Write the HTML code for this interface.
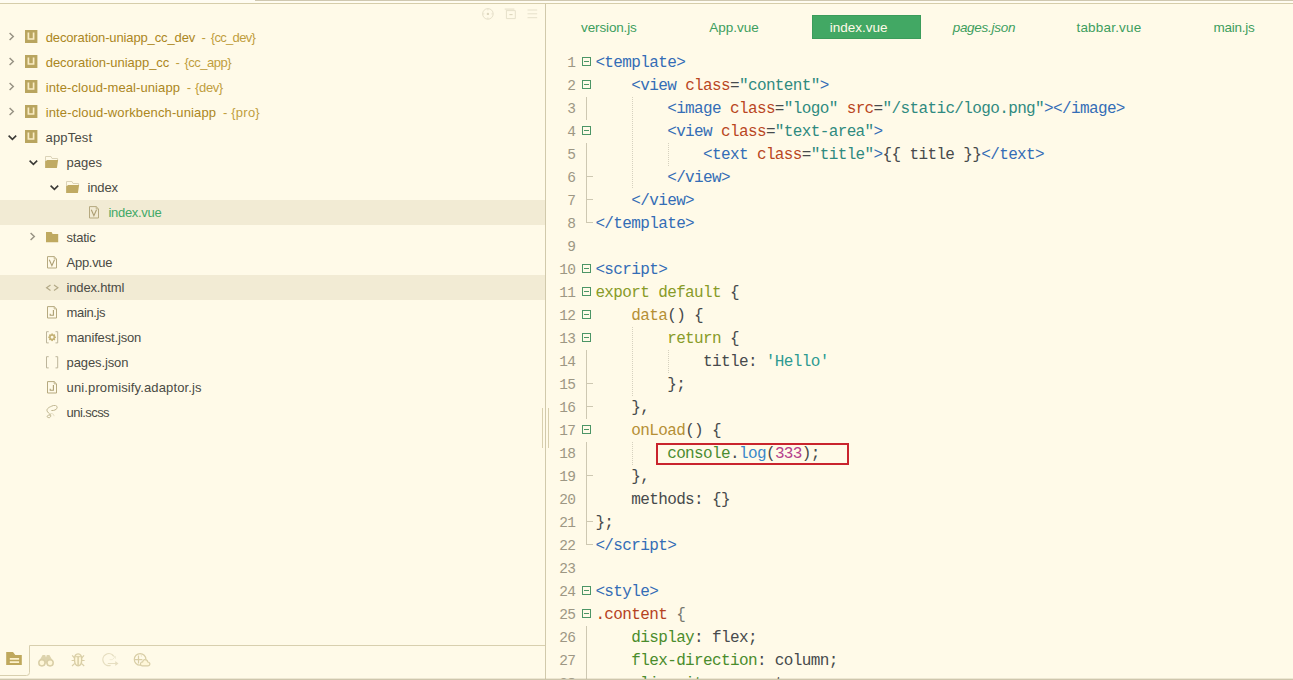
<!DOCTYPE html>
<html>
<head>
<meta charset="utf-8">
<title>HBuilderX</title>
<style>
html,body{margin:0;padding:0;}
body{width:1293px;height:680px;overflow:hidden;background:#fffae8;position:relative;font-family:"Liberation Sans",sans-serif;}
.abs{position:absolute;}
#top0a{left:0;top:0;width:255px;height:1px;background:#fffcf3;}
#top0b{left:255px;top:0;width:1038px;height:1px;background:#d0c8b0;}
#top12{left:0;top:1px;width:1293px;height:2px;background:#fffcf1;}
#top3{left:0;top:3px;width:1293px;height:1px;background:#d6cdaa;}
#bot{left:0;top:678px;width:1293px;height:1px;background:rgba(190,180,150,0.28);}
#bot2{left:0;top:679px;width:1293px;height:1px;background:#cec6ac;}
#vsplit{left:545px;top:4px;width:1px;height:675px;background:#d1c9ab;}
#grip1{left:542px;top:408px;width:1px;height:40px;background:#d8cfae;}
#grip2{left:548px;top:408px;width:1px;height:40px;background:#d8cfae;}
.row{position:absolute;left:0;width:545px;height:25px;}
.row.hl{background:#f2ebd4;}
.t{position:absolute;top:0;line-height:25px;font-size:13px;color:#4a4a44;white-space:nowrap;}
.t.g{color:#ab8622;}
.t.g2{color:#bf9e3e;}
.t.sel{color:#43a967;}
.row svg{position:absolute;}
.tab{position:absolute;top:15.5px;height:24px;line-height:24px;font-size:13.5px;color:#3d9e5e;white-space:nowrap;}
#tabsel{left:812px;top:15px;width:107px;height:22px;background:#42a864;border:1px solid #3b9c5b;}
.ln{position:absolute;left:546px;width:29.3px;text-align:right;height:23px;line-height:23px;font-family:"Liberation Mono",monospace;font-size:14.5px;letter-spacing:-0.7px;color:#9d9784;}
.cl{position:absolute;left:595.4px;height:23px;line-height:23px;font-family:"Liberation Mono",monospace;font-size:16px;letter-spacing:-0.63px;color:#474a4c;white-space:pre;}
.tg{color:#346db6;}
.at{color:#b9471f;}
.vl{color:#2f8a80;}
.kw{color:#889b28;}
.fn{color:#b58f35;}
.st{color:#2e9a92;}
.ob{color:#4a8c30;}
.mt{color:#3a88c9;}
.nm{color:#b5408c;}
.se{color:#b5421f;}
.lb{color:#77776e;}
.pr{color:#4a8c2c;}
.fold{position:absolute;left:582px;width:7px;height:7px;border:1px solid #4c9566;}
.fold:after{content:"";position:absolute;left:1px;top:3px;width:5px;height:1px;background:#4c9566;}
.fl{position:absolute;left:586px;width:1px;background:#cec8b2;}
.ft{position:absolute;left:587px;width:6px;height:1px;background:#cec8b2;}
.ig{position:absolute;width:1px;background-image:linear-gradient(to bottom,#d6d1bf 50%,transparent 50%);background-size:1px 2px;}
#redbox{left:655.5px;top:442.5px;width:189px;height:18px;border:2px solid #c9242d;}
</style>
</head>
<body>
<div id="tree">
<div class="row" style="top:25px">
<svg style="left:8px;top:6.4px" width="8" height="11" viewBox="0 0 8 11"><path d="M1.6 1.9 L5.3 5.5 L1.6 9.1" fill="none" stroke="#979283" stroke-width="1.45"/></svg>
<svg style="left:25px;top:5px" width="13" height="13" viewBox="0 0 13 13"><rect width="12.4" height="13" fill="#b9a55f"/><path d="M3.4 2.6 V9 H8.6 V2.6" fill="none" stroke="#f9ecc3" stroke-width="1.7"/></svg>
<span class="t g" style="left:45.7px;letter-spacing:-0.126px">decoration-uniapp_cc_dev</span>
<span class="t g2" style="left:201.6px;letter-spacing:0px">-</span>
<span class="t g2" style="left:210.8px;letter-spacing:-0.693px">{cc_dev}</span>
</div>
<div class="row" style="top:50px">
<svg style="left:8px;top:6.4px" width="8" height="11" viewBox="0 0 8 11"><path d="M1.6 1.9 L5.3 5.5 L1.6 9.1" fill="none" stroke="#979283" stroke-width="1.45"/></svg>
<svg style="left:25px;top:5px" width="13" height="13" viewBox="0 0 13 13"><rect width="12.4" height="13" fill="#b9a55f"/><path d="M3.4 2.6 V9 H8.6 V2.6" fill="none" stroke="#f9ecc3" stroke-width="1.7"/></svg>
<span class="t g" style="left:45.7px;letter-spacing:-0.037px">decoration-uniapp_cc</span>
<span class="t g2" style="left:175.6px;letter-spacing:0px">-</span>
<span class="t g2" style="left:184.4px;letter-spacing:-0.471px">{cc_app}</span>
</div>
<div class="row" style="top:75px">
<svg style="left:8px;top:6.4px" width="8" height="11" viewBox="0 0 8 11"><path d="M1.6 1.9 L5.3 5.5 L1.6 9.1" fill="none" stroke="#979283" stroke-width="1.45"/></svg>
<svg style="left:25px;top:5px" width="13" height="13" viewBox="0 0 13 13"><rect width="12.4" height="13" fill="#b9a55f"/><path d="M3.4 2.6 V9 H8.6 V2.6" fill="none" stroke="#f9ecc3" stroke-width="1.7"/></svg>
<span class="t g" style="left:45.7px;letter-spacing:0.098px">inte-cloud-meal-uniapp</span>
<span class="t g2" style="left:186.8px;letter-spacing:0px">-</span>
<span class="t g2" style="left:195.1px;letter-spacing:-0.388px">{dev}</span>
</div>
<div class="row" style="top:100px">
<svg style="left:8px;top:6.4px" width="8" height="11" viewBox="0 0 8 11"><path d="M1.6 1.9 L5.3 5.5 L1.6 9.1" fill="none" stroke="#979283" stroke-width="1.45"/></svg>
<svg style="left:25px;top:5px" width="13" height="13" viewBox="0 0 13 13"><rect width="12.4" height="13" fill="#b9a55f"/><path d="M3.4 2.6 V9 H8.6 V2.6" fill="none" stroke="#f9ecc3" stroke-width="1.7"/></svg>
<span class="t g" style="left:45.7px;letter-spacing:0.133px">inte-cloud-workbench-uniapp</span>
<span class="t g2" style="left:222.9px;letter-spacing:0px">-</span>
<span class="t g2" style="left:231.2px;letter-spacing:0.263px">{pro}</span>
</div>
<div class="row" style="top:125px">
<svg style="left:7px;top:9px" width="11" height="8" viewBox="0 0 11 8"><path d="M1.6 1.6 L5.4 5.4 L9.2 1.6" fill="none" stroke="#3a3935" stroke-width="1.55"/></svg>
<svg style="left:25px;top:5px" width="13" height="13" viewBox="0 0 13 13"><rect width="12.4" height="13" fill="#b9a55f"/><path d="M3.4 2.6 V9 H8.6 V2.6" fill="none" stroke="#f9ecc3" stroke-width="1.7"/></svg>
<span class="t " style="left:45.6px;letter-spacing:0.158px">appTest</span>
</div>
<div class="row" style="top:150px">
<svg style="left:28px;top:9px" width="11" height="8" viewBox="0 0 11 8"><path d="M1.6 1.6 L5.4 5.4 L9.2 1.6" fill="none" stroke="#3a3935" stroke-width="1.55"/></svg>
<svg style="left:45px;top:6px" width="14" height="13" viewBox="0 0 14 13"><path d="M0.5 6 V0.5 H6 L7 2.5 H12.6 V4" fill="none" stroke="#dbd3b8" stroke-width="1"/><path d="M0.1 11.9 V5.6 L2.2 4.1 H13.1 L11.9 11.9 Z" fill="#c0aa63"/></svg>
<span class="t " style="left:66.6px;letter-spacing:-0.025px">pages</span>
</div>
<div class="row" style="top:175px">
<svg style="left:49px;top:9px" width="11" height="8" viewBox="0 0 11 8"><path d="M1.6 1.6 L5.4 5.4 L9.2 1.6" fill="none" stroke="#3a3935" stroke-width="1.55"/></svg>
<svg style="left:66px;top:6px" width="14" height="13" viewBox="0 0 14 13"><path d="M0.5 6 V0.5 H6 L7 2.5 H12.6 V4" fill="none" stroke="#dbd3b8" stroke-width="1"/><path d="M0.1 11.9 V5.6 L2.2 4.1 H13.1 L11.9 11.9 Z" fill="#c0aa63"/></svg>
<span class="t " style="left:87.5px;letter-spacing:-0.125px">index</span>
</div>
<div class="row hl" style="top:200px">
<svg style="left:89px;top:6px" width="11" height="13" viewBox="0 0 11 13"><path d="M0.5 0.6 H7.2 L9.5 2.9 V12 H0.5 Z" fill="none" stroke="#b6a97f" stroke-width="1"/><path d="M7.2 0.6 V2.9 H9.5" fill="none" stroke="#b6a97f" stroke-width="0.8"/><path d="M2.3 3.7 L4.9 9.6 L7.5 3.7" fill="none" stroke="#ac9e72" stroke-width="1.1"/></svg>
<span class="t sel" style="left:108.5px;letter-spacing:-0.306px">index.vue</span>
</div>
<div class="row" style="top:225px">
<svg style="left:29px;top:6.4px" width="8" height="11" viewBox="0 0 8 11"><path d="M1.6 1.9 L5.3 5.5 L1.6 9.1" fill="none" stroke="#979283" stroke-width="1.45"/></svg>
<svg style="left:46px;top:7px" width="13" height="11" viewBox="0 0 13 11"><path d="M0 0 H5.6 L6.6 2 H12.2 V10.3 H0 Z" fill="#bfa960"/></svg>
<span class="t " style="left:66.6px;letter-spacing:-0.25px">static</span>
</div>
<div class="row" style="top:250px">
<svg style="left:47px;top:6px" width="11" height="13" viewBox="0 0 11 13"><path d="M0.5 0.6 H7.2 L9.5 2.9 V12 H0.5 Z" fill="none" stroke="#b6a97f" stroke-width="1"/><path d="M7.2 0.6 V2.9 H9.5" fill="none" stroke="#b6a97f" stroke-width="0.8"/><path d="M2.3 3.7 L4.9 9.6 L7.5 3.7" fill="none" stroke="#ac9e72" stroke-width="1.1"/></svg>
<span class="t " style="left:66.6px;letter-spacing:-0.3px">App.vue</span>
</div>
<div class="row hl" style="top:275px">
<svg style="left:45px;top:8px" width="14" height="10" viewBox="0 0 14 10"><path d="M5.5 2 L1.6 4.7 L5.5 7.4 M9 2 L12.9 4.7 L9 7.4" fill="none" stroke="#b3a986" stroke-width="1.2"/></svg>
<span class="t " style="left:66.6px;letter-spacing:-0.172px">index.html</span>
</div>
<div class="row" style="top:300px">
<svg style="left:47px;top:6px" width="11" height="13" viewBox="0 0 11 13"><path d="M0.5 0.6 H7.2 L9.5 2.9 V12 H0.5 Z" fill="none" stroke="#b6a97f" stroke-width="1"/><path d="M7.2 0.6 V2.9 H9.5" fill="none" stroke="#b6a97f" stroke-width="0.8"/><path d="M6.4 4 V9.3 H3.2 V7.7" fill="none" stroke="#ac9e72" stroke-width="1.1"/></svg>
<span class="t " style="left:66.6px;letter-spacing:-0.367px">main.js</span>
</div>
<div class="row" style="top:325px">
<svg style="left:46px;top:6px" width="13" height="13" viewBox="0 0 13 13"><path d="M2.7 0.7 H0.5 V11.9 H2.7 M9.5 0.7 H11.7 V11.9 H9.5" fill="none" stroke="#bdb59b" stroke-width="1"/><rect x="5.3" y="2.5" width="1.6" height="1.6" fill="#c4b173" transform="rotate(0 6.1 6.3)"/><rect x="5.3" y="2.5" width="1.6" height="1.6" fill="#c4b173" transform="rotate(45 6.1 6.3)"/><rect x="5.3" y="2.5" width="1.6" height="1.6" fill="#c4b173" transform="rotate(90 6.1 6.3)"/><rect x="5.3" y="2.5" width="1.6" height="1.6" fill="#c4b173" transform="rotate(135 6.1 6.3)"/><rect x="5.3" y="2.5" width="1.6" height="1.6" fill="#c4b173" transform="rotate(180 6.1 6.3)"/><rect x="5.3" y="2.5" width="1.6" height="1.6" fill="#c4b173" transform="rotate(225 6.1 6.3)"/><rect x="5.3" y="2.5" width="1.6" height="1.6" fill="#c4b173" transform="rotate(270 6.1 6.3)"/><rect x="5.3" y="2.5" width="1.6" height="1.6" fill="#c4b173" transform="rotate(315 6.1 6.3)"/><circle cx="6.1" cy="6.3" r="2.2" fill="none" stroke="#c4b173" stroke-width="1.5"/></svg>
<span class="t " style="left:66.6px;letter-spacing:-0.158px">manifest.json</span>
</div>
<div class="row" style="top:350px">
<svg style="left:46px;top:6px" width="13" height="13" viewBox="0 0 13 13"><path d="M2.7 0.7 H0.5 V11.9 H2.7 M9.5 0.7 H11.7 V11.9 H9.5" fill="none" stroke="#bdb59b" stroke-width="1"/></svg>
<span class="t " style="left:66.6px;letter-spacing:-0.122px">pages.json</span>
</div>
<div class="row" style="top:375px">
<svg style="left:47px;top:6px" width="11" height="13" viewBox="0 0 11 13"><path d="M0.5 0.6 H7.2 L9.5 2.9 V12 H0.5 Z" fill="none" stroke="#b6a97f" stroke-width="1"/><path d="M7.2 0.6 V2.9 H9.5" fill="none" stroke="#b6a97f" stroke-width="0.8"/><path d="M6.4 4 V9.3 H3.2 V7.7" fill="none" stroke="#ac9e72" stroke-width="1.1"/></svg>
<span class="t " style="left:66.6px;letter-spacing:0.126px">uni.promisify.adaptor.js</span>
</div>
<div class="row" style="top:400px">
<svg style="left:46px;top:5px" width="13" height="14" viewBox="0 0 13 14"><path d="M5.4 5.5 C7 5.6 8 5.4 8.9 5 C10.6 4.2 11.6 3 11 2.1 C10.7 0.8 10 0.4 9.6 0.35 C8 0.2 6.6 0.7 5.7 1.15 C4 1.9 3 2.4 2.5 2.8 C1.2 3.8 0.8 4.8 1 5.7 C1.2 6.6 1.8 7.2 2.5 7.9 C3.4 8.6 4 9.2 4.4 9.9 C4.8 10.6 4.9 11 4.6 11.5 C4.2 12.4 3.4 12.8 2.8 12.6 C1.8 12.6 1.1 12.2 1.2 11.5 C1.3 10.8 1.8 10.3 2.5 10.2 C3.2 10.1 3.8 10 4.4 9.9" fill="none" stroke="#beb48e" stroke-width="1"/><path d="M4.1 8.6 C5.4 8.4 6.6 8.6 7.3 9.2 C7.8 9.8 8 10.4 8 11.2" fill="none" stroke="#e3dcc2" stroke-width="0.9"/></svg>
<span class="t " style="left:66.6px;letter-spacing:-0.564px">uni.scss</span>
</div>
</div>
<svg class="abs" style="left:481px;top:7px" width="14" height="14" viewBox="0 0 14 14"><circle cx="6.9" cy="6.9" r="5.3" fill="none" stroke="#e6e0ca" stroke-width="1"/><circle cx="6.9" cy="6.9" r="1.2" fill="#ddd6bd"/><path d="M6.9 1.6V3.4M6.9 10.4V12.2M1.6 6.9H3.4M10.4 6.9H12.2" stroke="#e6e0ca" stroke-width="0.9"/></svg>
<svg class="abs" style="left:504px;top:8px" width="13" height="12" viewBox="0 0 13 12"><path d="M0.7 1.1H10.4" stroke="#e6e0ca" stroke-width="1.1"/><path d="M2.4 2.2V10.6H11.3V2.6H2.4" fill="none" stroke="#e6e0ca" stroke-width="1"/><path d="M5.4 6.6H8.6" stroke="#ddd6bd" stroke-width="1.1"/></svg>
<svg class="abs" style="left:527px;top:9px" width="11" height="10" viewBox="0 0 11 10"><path d="M0.5 1H10.2M0.5 4.8H10.2M0.5 8.7H10.2" stroke="#e6e0ca" stroke-width="1"/></svg>
<svg class="abs" style="left:0;top:643px" width="546" height="35" viewBox="0 0 546 35"><path d="M0 32.5 H26.5 Q29.5 32.5 29.5 29.5 V2.5 H545" fill="none" stroke="#d8cfae" stroke-width="1"/></svg>
<svg class="abs" style="left:6px;top:652px" width="16" height="13" viewBox="0 0 16 13"><path d="M0.2 0 H7 L9.3 2.9 H15.8 V13 H0.2 Z" fill="#bfa85c"/><path d="M3.8 6 H13.1 V7.7 H3.8Z M3.8 9.3 H13.1 V11 H3.8Z" fill="#fdf1cb"/></svg>
<svg class="abs" style="left:37px;top:653px" width="18" height="14" viewBox="0 0 18 14"><path d="M2 8.2 L5.6 1.9 H8.2 L9 4.4 L9.8 1.9 H12.4 L16 8.2 L13 6.2 L10.8 8.4 V10.4 H7.2 V8.4 L5 6.2 Z" fill="#ddd3ad"/><circle cx="4.9" cy="9.8" r="3.1" fill="#fff7d9" stroke="#d9cea6" stroke-width="1.5"/><circle cx="13.1" cy="9.8" r="3.1" fill="#fff7d9" stroke="#d9cea6" stroke-width="1.5"/></svg>
<svg class="abs" style="left:70px;top:652px" width="16" height="16" viewBox="0 0 16 16"><path d="M8.1 1.9 C5.6 1.9 4.5 4 4.5 7.6 C4.5 11.6 5.9 13.9 8.1 13.9 C10.3 13.9 11.7 11.6 11.7 7.6 C11.7 4 10.6 1.9 8.1 1.9 Z" fill="#fff7d9" stroke="#d9cea6" stroke-width="1.4"/><path d="M8.1 4.8 V13.6" stroke="#d9cea6" stroke-width="1.5"/><path d="M5.4 4.7 H10.8" stroke="#d9cea6" stroke-width="1"/><path d="M4.6 6.2 L2.2 3.4 M11.6 6.2 L14 3.4 M1.6 8.5 H4.4 M14.6 8.5 H11.8 M4.8 11.4 L2 14 M11.4 11.4 L14.2 14" fill="none" stroke="#d9cea6" stroke-width="1.2"/></svg>
<svg class="abs" style="left:101px;top:652px" width="18" height="16" viewBox="0 0 18 16"><path d="M12.6 4 A6 6 0 1 0 9.6 13.4" fill="none" stroke="#e6dec0" stroke-width="1.3"/><path d="M6.8 11.5 H16.2 M14.2 9.7 L16.5 11.5 L14.2 13.3" fill="none" stroke="#e6dec0" stroke-width="1.2"/><path d="M8.6 7.7 H11.4 L14.2 4.6 M12 4.4 H14.4 V6.8" fill="none" stroke="#f0ead3" stroke-width="1"/></svg>
<svg class="abs" style="left:133px;top:652px" width="18" height="15" viewBox="0 0 18 15"><circle cx="7.1" cy="7.4" r="5.8" fill="none" stroke="#d9cea6" stroke-width="1.2"/><path d="M1.8 7.6 H9.4 M5.5 3.6 V11.4" fill="none" stroke="#d9cea6" stroke-width="1.2"/><path d="M8 2 Q8.4 3.4 8.4 4.6" fill="none" stroke="#e7dfc2" stroke-width="0.9"/><path d="M7.6 12.6 C7 10.6 9 9.7 9.6 9.9 C10 8.2 11.4 7.5 12 7.6 C13.6 7.6 14.6 9 14.8 10 C16.6 10.4 17.2 11.8 16.7 12.8 C16.3 13.8 15.4 13.9 15 13.9 H9.2 C8.2 13.9 7.8 13.4 7.6 12.6 Z" fill="#fff7d9" stroke="#d9cea6" stroke-width="1.2"/></svg>
<div class="abs" id="vsplit"></div><div class="abs" id="grip1"></div><div class="abs" id="grip2"></div>
<div class="abs" id="tabsel"></div>
<span class="tab" style="left:581.1px;letter-spacing:-0.144px;">version.js</span>
<span class="tab" style="left:709.2px;letter-spacing:0.008px;">App.vue</span>
<span class="tab" style="left:829.8px;letter-spacing:-0.025px;color:#fffae8;">index.vue</span>
<span class="tab" style="left:952.65px;letter-spacing:-0.272px;font-style:italic;">pages.json</span>
<span class="tab" style="left:1076.5px;letter-spacing:0.183px;">tabbar.vue</span>
<span class="tab" style="left:1213.5px;letter-spacing:-0.242px;">main.js</span>
<div id="code">
<div class="ln" style="top:51.9px">1</div>
<div class="cl" style="top:51.5px"><span class="tg">&lt;template&gt;</span></div>
<div class="ln" style="top:74.9px">2</div>
<div class="cl" style="top:74.5px">    <span class="tg">&lt;view</span> <span class="at">class</span>=<span class="vl">&quot;content&quot;</span><span class="tg">&gt;</span></div>
<div class="ln" style="top:97.9px">3</div>
<div class="cl" style="top:97.5px">        <span class="tg">&lt;image</span> <span class="at">class</span>=<span class="vl">&quot;logo&quot;</span> <span class="at">src</span>=<span class="vl">&quot;/static/logo.png&quot;</span><span class="tg">&gt;&lt;/image&gt;</span></div>
<div class="ln" style="top:120.9px">4</div>
<div class="cl" style="top:120.5px">        <span class="tg">&lt;view</span> <span class="at">class</span>=<span class="vl">&quot;text-area&quot;</span><span class="tg">&gt;</span></div>
<div class="ln" style="top:143.9px">5</div>
<div class="cl" style="top:143.5px">            <span class="tg">&lt;text</span> <span class="at">class</span>=<span class="vl">&quot;title&quot;</span><span class="tg">&gt;</span>{{ title }}<span class="tg">&lt;/text&gt;</span></div>
<div class="ln" style="top:166.9px">6</div>
<div class="cl" style="top:166.5px">        <span class="tg">&lt;/view&gt;</span></div>
<div class="ln" style="top:189.9px">7</div>
<div class="cl" style="top:189.5px">    <span class="tg">&lt;/view&gt;</span></div>
<div class="ln" style="top:212.9px">8</div>
<div class="cl" style="top:212.5px"><span class="tg">&lt;/template&gt;</span></div>
<div class="ln" style="top:235.9px">9</div>
<div class="cl" style="top:235.5px"></div>
<div class="ln" style="top:258.9px">10</div>
<div class="cl" style="top:258.5px"><span class="tg">&lt;script&gt;</span></div>
<div class="ln" style="top:281.9px">11</div>
<div class="cl" style="top:281.5px"><span class="kw">export default</span> {</div>
<div class="ln" style="top:304.9px">12</div>
<div class="cl" style="top:304.5px">    <span class="fn">data</span>() {</div>
<div class="ln" style="top:327.9px">13</div>
<div class="cl" style="top:327.5px">        <span class="kw">return</span> {</div>
<div class="ln" style="top:350.9px">14</div>
<div class="cl" style="top:350.5px">            title: <span class="st">&#x27;Hello&#x27;</span></div>
<div class="ln" style="top:373.9px">15</div>
<div class="cl" style="top:373.5px">        };</div>
<div class="ln" style="top:396.9px">16</div>
<div class="cl" style="top:396.5px">    },</div>
<div class="ln" style="top:419.9px">17</div>
<div class="cl" style="top:419.5px">    <span class="fn">onLoad</span>() {</div>
<div class="ln" style="top:442.9px">18</div>
<div class="cl" style="top:442.5px">        <span class="ob">console</span>.<span class="mt">log</span>(<span class="nm">333</span>);</div>
<div class="ln" style="top:465.9px">19</div>
<div class="cl" style="top:465.5px">    },</div>
<div class="ln" style="top:488.9px">20</div>
<div class="cl" style="top:488.5px">    methods: {}</div>
<div class="ln" style="top:511.9px">21</div>
<div class="cl" style="top:511.5px">};</div>
<div class="ln" style="top:534.9px">22</div>
<div class="cl" style="top:534.5px"><span class="tg">&lt;/script&gt;</span></div>
<div class="ln" style="top:557.9px">23</div>
<div class="cl" style="top:557.5px"></div>
<div class="ln" style="top:580.9px">24</div>
<div class="cl" style="top:580.5px"><span class="tg">&lt;style&gt;</span></div>
<div class="ln" style="top:603.9px">25</div>
<div class="cl" style="top:603.5px"><span class="se">.content</span> <span class="lb">{</span></div>
<div class="ln" style="top:626.9px">26</div>
<div class="cl" style="top:626.5px">    <span class="pr">display</span>: flex;</div>
<div class="ln" style="top:649.9px">27</div>
<div class="cl" style="top:649.5px">    <span class="pr">flex-direction</span>: column;</div>
<div class="ln" style="top:672.9px">28</div>
<div class="cl" style="top:672.5px">    <span class="pr">align-items</span>: center;</div>
<div class="fold" style="top:57px"></div>
<div class="fold" style="top:80px"></div>
<div class="fold" style="top:126px"></div>
<div class="fold" style="top:264px"></div>
<div class="fold" style="top:287px"></div>
<div class="fold" style="top:310px"></div>
<div class="fold" style="top:333px"></div>
<div class="fold" style="top:425px"></div>
<div class="fold" style="top:586px"></div>
<div class="fold" style="top:609px"></div>
<div class="fl" style="top:96.5px;height:23.0px"></div>
<div class="fl" style="top:142.5px;height:80.5px"></div>
<div class="ft" style="top:176.0px"></div>
<div class="ft" style="top:199.0px"></div>
<div class="ft" style="top:222.0px"></div>
<div class="fl" style="top:349.5px;height:69.0px"></div>
<div class="ft" style="top:383.0px"></div>
<div class="ft" style="top:406.0px"></div>
<div class="fl" style="top:441.5px;height:103.5px"></div>
<div class="ft" style="top:475.0px"></div>
<div class="ft" style="top:521.0px"></div>
<div class="ft" style="top:544.0px"></div>
<div class="fl" style="top:625.5px;height:69.0px"></div>
<div class="ig" style="left:632px;top:96.5px;height:92.0px"></div>
<div class="ig" style="left:668px;top:142.5px;height:23.0px"></div>
<div class="ig" style="left:632px;top:326.5px;height:69.0px"></div>
<div class="ig" style="left:668px;top:349.5px;height:23.0px"></div>
<div class="ig" style="left:632px;top:441.5px;height:23.0px"></div>
</div>
<div class="abs" id="redbox"></div>
<div class="abs" id="bot"></div><div class="abs" id="bot2"></div>
<div class="abs" id="top0a"></div><div class="abs" id="top0b"></div><div class="abs" id="top12"></div><div class="abs" id="top3"></div>
</body>
</html>
